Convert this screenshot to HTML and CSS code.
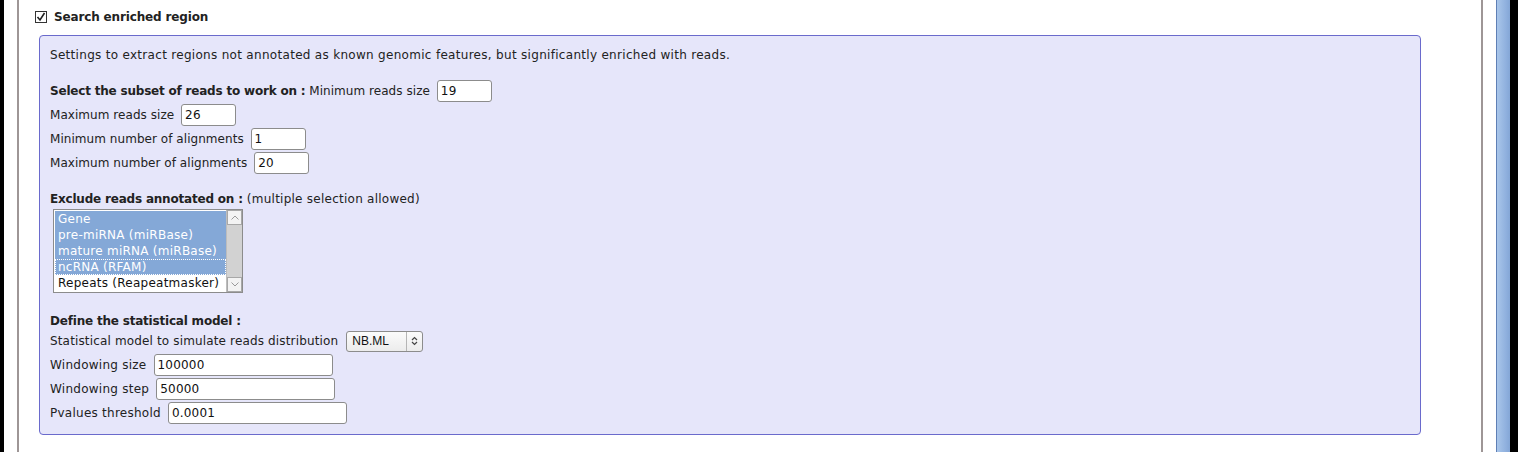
FILE: index.html
```html
<!DOCTYPE html>
<html>
<head>
<meta charset="utf-8">
<link rel="stylesheet" href="styles.css">
</head>
<body>
<div class="frame">
  <div class="edge-black"></div>
  <div class="edge-white"></div>
  <div class="rule"></div>
  <main class="content">
    <div class="section-head">
      <span class="checkbox"><svg width="12" height="12" viewBox="0 0 12 12"><rect x="0.5" y="0.5" width="11" height="11" fill="#fff" stroke="#333"/><path d="M2.5 6 L5 9 L9.5 2" fill="none" stroke="#222" stroke-width="1.6"/></svg></span>
      <span class="section-title">Search enriched region</span>
    </div>
    <div class="panel">
      <div class="intro">Settings to extract regions not annotated as known genomic features, but significantly enriched with reads.</div>

      <div class="group subset-group">
        <div class="row"><b>Select the subset of reads to work on :</b>&nbsp;Minimum reads size <span class="field small">19</span></div>
        <div class="row">Maximum reads size <span class="field small">26</span></div>
        <div class="row">Minimum number of alignments <span class="field small">1</span></div>
        <div class="row">Maximum number of alignments <span class="field small">20</span></div>
      </div>

      <div class="group">
        <div class="heading"><b>Exclude reads annotated on :</b> (multiple selection allowed)</div>
        <div class="listbox">
          <div class="options">
            <div class="opt sel">Gene</div>
            <div class="opt sel">pre-miRNA (miRBase)</div>
            <div class="opt sel">mature miRNA (miRBase)</div>
            <div class="opt sel focus">ncRNA (RFAM)</div>
            <div class="opt">Repeats (Reapeatmasker)</div>
          </div>
          <div class="vscroll">
            <div class="sbtn"><svg width="8" height="5" viewBox="0 0 8 5"><path d="M0.5 4.5 L4 1 L7.5 4.5" fill="none" stroke="#9a9a9a"/></svg></div>
            <div class="strack"></div>
            <div class="sbtn"><svg width="8" height="5" viewBox="0 0 8 5"><path d="M0.5 0.5 L4 4 L7.5 0.5" fill="none" stroke="#9a9a9a"/></svg></div>
          </div>
        </div>
      </div>

      <div class="group stat-group">
        <div class="heading"><b>Define the statistical model :</b></div>
        <div class="row model-row">Statistical model to simulate reads distribution <span class="dropdown"><span class="dd-text">NB.ML</span><span class="dd-arrow"><svg width="7" height="10" viewBox="0 0 7 10"><path d="M1 4 L3.5 1.5 L6 4 M1 6 L3.5 8.5 L6 6" fill="none" stroke="#444" stroke-width="1.2"/></svg></span></span></div>
        <div class="row">Windowing size <span class="field wide">100000</span></div>
        <div class="row">Windowing step <span class="field wide">50000</span></div>
        <div class="row">Pvalues threshold <span class="field wide">0.0001</span></div>
      </div>
    </div>
  </main>
  <div class="rule"></div>
  <div class="gutter"></div>
  <div class="bluebar"></div>
  <div class="edge-black right"></div>
</div>
</body>
</html>
```

FILE: styles.css
```css
html, body {
  margin: 0;
  padding: 0;
  background: #fff;
}
body {
  font-family: "DejaVu Sans", Verdana, sans-serif;
  font-size: 12px;
  color: #222;
  letter-spacing: 0.25px;
}
b {
  letter-spacing: -0.2px;
}
.frame {
  display: flex;
  height: 452px;
  overflow: hidden;
}
.edge-black {
  width: 4px;
  background: #000;
  flex: none;
}
.edge-black.right {
  width: 8px;
}
.edge-white {
  width: 13px;
  flex: none;
}
.rule {
  width: 2px;
  background: #9e9696;
  flex: none;
}
.content {
  flex: 1;
  min-width: 0;
}
.gutter {
  width: 13px;
  flex: none;
}
.bluebar {
  width: 13px;
  flex: none;
  border-left: 1px solid #5f7fb5;
  background: linear-gradient(to right, #a9c6ea, #8fb0de 70%, #84a6d6);
}
.section-head {
  display: flex;
  align-items: center;
  height: 24px;
  margin-top: 5px;
  padding-left: 16px;
}
.checkbox {
  display: inline-flex;
  width: 12px;
  height: 12px;
  margin-right: 7px;
  margin-top: -1px;
}
.section-title {
  font-weight: bold;
  font-size: 12px;
  letter-spacing: -0.15px;
  color: #222;
}
.panel {
  margin: 6px 0 0 20px;
  width: 1360px;
  background: #e6e6fa;
  border: 1px solid #6a6acc;
  border-radius: 4px;
  padding: 11px 10px 9px 10px;
  box-sizing: content-box;
}
.intro {
  height: 16px;
  line-height: 16px;
  letter-spacing: 0.3px;
}
.group {
  margin-top: 16px;
}
.subset-group .row {
  letter-spacing: 0.05px;
}
.subset-group b {
  letter-spacing: -0.2px;
}
.model-row {
  letter-spacing: 0.15px;
}
.row {
  display: flex;
  align-items: center;
  height: 24px;
  white-space: pre;
}
.heading {
  height: 16px;
  line-height: 16px;
}
.field {
  display: inline-block;
  box-sizing: border-box;
  height: 22px;
  line-height: 20px;
  border: 1px solid #8c8c8c;
  border-radius: 3px;
  background: #fff;
  padding: 0 3px;
  margin-left: 3px;
  color: #111;
  letter-spacing: 0.2px;
}
.field.small {
  width: 55px;
}
.field.wide {
  width: 179px;
}
.listbox {
  display: flex;
  width: 190px;
  height: 84px;
  box-sizing: border-box;
  border: 1px solid #8c8c8c;
  background: #fff;
  margin: 2px 0 0 3px;
  padding: 1px;
}
.options {
  flex: 1;
}
.opt {
  height: 16px;
  line-height: 16px;
  padding-left: 3px;
  white-space: nowrap;
  box-sizing: border-box;
  color: #111;
}
.opt.sel {
  background: #84a8d7;
  color: #fff;
}
.opt.focus {
  outline: 1px dotted #fff;
  outline-offset: -1px;
}
.vscroll {
  width: 15px;
  display: flex;
  flex-direction: column;
  background: #d2d2d2;
  border-left: 1px solid #bdbdbd;
  margin: -1px -1px -1px 0;
}
.sbtn {
  height: 15px;
  display: flex;
  align-items: center;
  justify-content: center;
  background: #f3f3f3;
  border: 1px solid #a8a8a8;
  box-sizing: border-box;
}
.strack {
  flex: 1;
}
.stat-group {
  margin-top: 20px;
}
.dropdown {
  display: inline-flex;
  align-items: stretch;
  box-sizing: border-box;
  height: 21px;
  width: 77px;
  margin-left: 4px;
  border: 1px solid #8c8c8c;
  border-radius: 3px;
  background: linear-gradient(#fbfbfb, #ececec);
  font-family: "Liberation Sans", Arial, sans-serif;
  font-size: 12px;
  letter-spacing: 0;
  color: #111;
}
.dd-text {
  flex: 1;
  padding-left: 5px;
  display: flex;
  align-items: center;
}
.dd-arrow {
  width: 15px;
  border-left: 1px solid #b5b5b5;
  display: flex;
  align-items: center;
  justify-content: center;
}
```
